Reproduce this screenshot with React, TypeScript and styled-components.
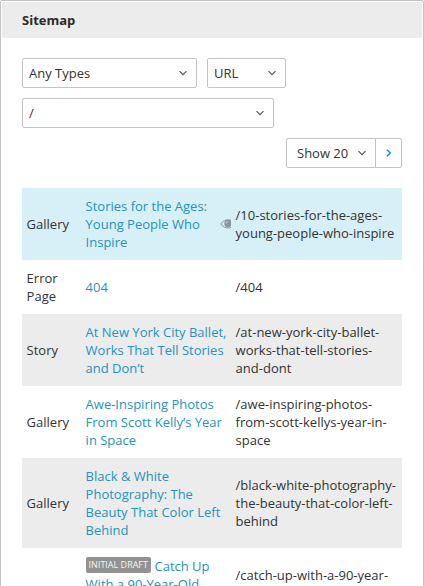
import React from "react";
import styled, { createGlobalStyle } from "styled-components";

const GlobalStyle = createGlobalStyle`
  * { box-sizing: border-box; }
  html, body { margin: 0; height: 100%; overflow: hidden; background: #fff; }
  body { font: 14px/18px "Open Sans", "Noto Sans", sans-serif; color: #333; }
`;

const Panel = styled.section`
  height: 586px;
  overflow: hidden;
  border: 1px solid #c4c4c4;
  border-bottom: 0;
  border-radius: 2px 2px 0 0;
  padding: 1px 1px 0;
  background: #fff;
`;

const Header = styled.header`
  height: 36px;
  padding: 0 20px;
  background: #ececec;
  font-size: 13px;
  font-weight: 700;
  line-height: 37px;
  color: #2b2b2b;
`;

const Body = styled.div`
  padding: 20px 20px 0;
`;

const Filters = styled.div`
  display: flex;
  flex-wrap: wrap;
  gap: 10px;
`;

const Select = styled.button<{ $width: number }>`
  display: flex;
  align-items: center;
  justify-content: space-between;
  width: ${(p) => p.$width}px;
  height: 30px;
  padding: 0 9px 0 6px;
  border: 1px solid #c4c4c4;
  border-radius: 2px;
  background: #fff;
  font: inherit;
  font-size: 13px;
  color: #333;
`;

const Pager = styled.div`
  display: flex;
  justify-content: flex-end;
  margin-top: 10px;
`;

const PageSize = styled(Select)`
  padding: 0 9px 0 10px;
  border-radius: 2px 0 0 2px;
`;

const NextButton = styled.button`
  display: flex;
  align-items: center;
  justify-content: center;
  width: 27px;
  height: 30px;
  margin-left: -1px;
  padding: 0;
  border: 1px solid #c4c4c4;
  border-radius: 0 2px 2px 0;
  background: #fff;
  color: #2493bd;
`;

const Rows = styled.div`
  margin-top: 20px;
`;

const Row = styled.div<{ $bg: string; $height?: number }>`
  display: grid;
  grid-template-columns: 59px 150px 1fr;
  align-items: center;
  min-height: ${(p) => p.$height ?? 0}px;
  padding: 9px 0;
  background: ${(p) => p.$bg};
`;

const Cell = styled.div`
  padding-left: 4.6px;
  font-size: 13px;
  white-space: nowrap;
`;

const TitleCell = styled(Cell)`
  display: flex;
  align-items: center;
  align-self: stretch;
  justify-content: space-between;
`;

const TitleLink = styled.a<{ $top: boolean }>`
  align-self: ${(p) => (p.$top ? "flex-start" : "center")};
  color: #2493bd;
`;

const UrlCell = styled(Cell)<{ $top: boolean }>`
  align-self: ${(p) => (p.$top ? "flex-start" : "center")};
  padding-top: ${(p) => (p.$top ? 9 : 0)}px;
`;

const Badge = styled.span`
  display: inline-block;
  height: 16px;
  margin: -2px 3.5px 0 0;
  padding: 0 3px;
  border-radius: 2px;
  background: #929292;
  color: #f4f4f4;
  font-size: 9px;
  line-height: 15px;
  vertical-align: 3px;
`;

const EyeIcon = styled.svg`
  flex: none;
`;

const Chevron = () => (
  <svg width="8" height="6" viewBox="0 0 8 6" fill="none" stroke="#555" strokeWidth="1.2">
    <path d="M0.5 1.2 4 4.7 7.5 1.2" />
  </svg>
);

const Eye = () => (
  <EyeIcon width="11" height="10" viewBox="0 0 11 10">
    <path
      d="M.7 5C2.8 2 5.6.8 8 .8Q9.6.8 11 1.4M.7 5C2.8 7.8 5.6 9 8 9Q9.6 9 11 8.5"
      fill="none"
      stroke="#89979b"
      strokeWidth="1"
    />
    <circle cx="8" cy="4.5" r="3.7" fill="#89979b" />
    <path d="M6 4.4Q6.1 2.8 7.8 2.5" fill="none" stroke="#d7eff7" strokeWidth=".9" />
  </EyeIcon>
);

type Item = {
  type: string[];
  title: string[];
  url: string[];
  bg: string;
  viewed?: boolean;
  badge?: string;
  height?: number;
};

const items: Item[] = [
  { type: ["Gallery"], title: ["Stories for the Ages:", "Young People Who", "Inspire"], url: ["/10-stories-for-the-ages-", "young-people-who-inspire"], bg: "#d7eff7", viewed: true },
  { type: ["Error", "Page"], title: ["404"], url: ["/404"], bg: "#fff" },
  { type: ["Story"], title: ["At New York City Ballet,", "Works That Tell Stories", "and Don’t"], url: ["/at-new-york-city-ballet-", "works-that-tell-stories-", "and-dont"], bg: "#ececec" },
  { type: ["Gallery"], title: ["Awe-Inspiring Photos", "From Scott Kelly’s Year", "in Space"], url: ["/awe-inspiring-photos-", "from-scott-kellys-year-in-", "space"], bg: "#fff" },
  { type: ["Gallery"], title: ["Black & White", "Photography: The", "Beauty That Color Left", "Behind"], url: ["/black-white-photography-", "the-beauty-that-color-left-", "behind"], bg: "#ececec" },
  { type: [], title: ["Catch Up", "With a 90-Year-Old"], url: ["/catch-up-with-a-90-year-"], bg: "#fff", badge: "INITIAL DRAFT", height: 72 },
];

const Lines = ({ lines }: { lines: string[] }) => (
  <>
    {lines.map((line, i) => (
      <React.Fragment key={line}>
        {i > 0 && <br />}
        {line}
      </React.Fragment>
    ))}
  </>
);

export default function App() {
  return (
    <>
      <GlobalStyle />
      <Panel>
        <Header>Sitemap</Header>
        <Body>
          <Filters>
            <Select $width={175}>Any Types<Chevron /></Select>
            <Select $width={79}>URL<Chevron /></Select>
            <Select $width={252}>/<Chevron /></Select>
          </Filters>
          <Pager>
            <PageSize $width={90}>Show 20<Chevron /></PageSize>
            <NextButton aria-label="Next page">
              <svg width="6" height="8" viewBox="0 0 6 8" fill="none" stroke="currentColor" strokeWidth="1.5">
                <path d="M1 .9 4.3 4 1 7.1" />
              </svg>
            </NextButton>
          </Pager>
          <Rows>
            {items.map((item) => (
              <Row key={item.url[0]} $bg={item.bg} $height={item.height}>
                <Cell><Lines lines={item.type} /></Cell>
                <TitleCell>
                  <TitleLink $top={!!item.badge}>
                    {item.badge && <Badge>{item.badge}</Badge>}
                    <Lines lines={item.title} />
                  </TitleLink>
                  {item.viewed && <Eye />}
                </TitleCell>
                <UrlCell $top={!!item.badge}><Lines lines={item.url} /></UrlCell>
              </Row>
            ))}
          </Rows>
        </Body>
      </Panel>
    </>
  );
}
